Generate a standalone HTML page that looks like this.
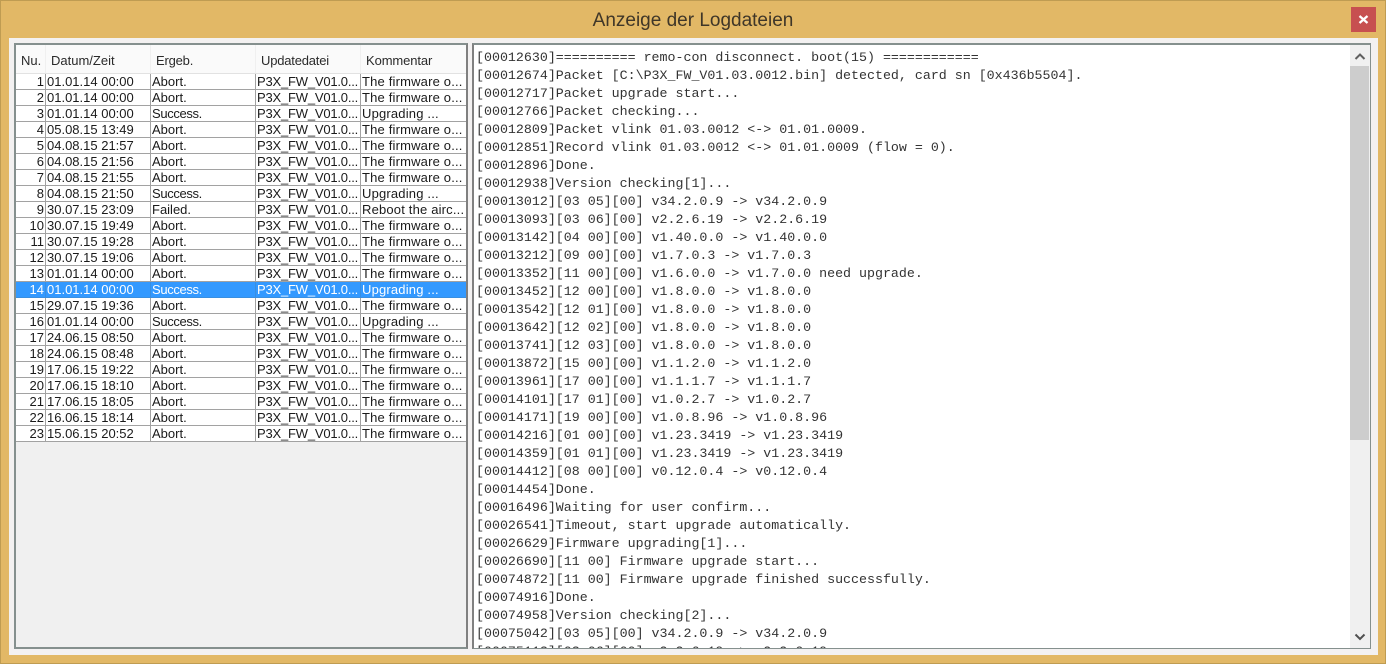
<!DOCTYPE html>
<html><head><meta charset="utf-8"><title>Anzeige der Logdateien</title>
<style>
html,body{margin:0;padding:0;width:1386px;height:664px;overflow:hidden;background:#e2b866}
*{box-sizing:border-box}
.abs{position:absolute}
#frame{left:0;top:0;width:1386px;height:664px;border:1px solid #bf9c52;background:#e2b866}
#title{left:0;top:9px;width:1386px;text-align:center;font:19px/24px "Liberation Sans",sans-serif;color:#3f3628}
#close{left:1351px;top:7px;width:25px;height:25px;background:#c75050}
#client{left:9px;top:38px;width:1369px;height:617px;background:#f3f1f1}
#lp{left:14px;top:43px;width:454px;height:606px;border:2px solid #85908e;border-right-color:#808080;background:#f0f0f0;overflow:hidden}
#hd{left:16px;top:45px;width:450px;height:28px;background:#fafafa;font:13px/31px "Liberation Sans",sans-serif;color:#2a2a2a}
#hd span{position:absolute;top:0}
#hd i{position:absolute;top:0;width:1px;height:28px;background:#f0f0f0}
table{position:absolute;left:16px;top:73px;width:450px;border-collapse:separate;border-spacing:0;table-layout:fixed;font:13px/14px "Liberation Sans",sans-serif;color:#1a1a1a;background:#fff;border-top:1px solid #e2e2e2}
td{height:16px;padding:1px 0 0 1px;border-right:1px solid #a2a2a2;border-bottom:1px solid #a2a2a2;white-space:nowrap;overflow:hidden;vertical-align:top;background:#fff}
td:first-child{text-align:right;padding:1px 1px 0 0}
td:nth-child(4){letter-spacing:-.2px}
td:last-child{border-right:0;letter-spacing:.18px}
td.o{letter-spacing:-.35px}
tr.s td{background:#3399ff;color:#fff;border-color:#3a8fe0}
#rp{left:472px;top:43px;width:899px;height:606px;border:2px solid #85908e;border-left-color:#808080;border-right-width:1px;border-bottom-width:1px;background:#fff;overflow:hidden}
#log{position:absolute;left:2px;top:3px;margin:0;padding-top:1px;font:13.3px/18px "Liberation Mono",monospace;color:#333;white-space:pre}
#sb{left:1350px;top:45px;width:20px;height:603px;background:#f0f0f0}
#th{left:1350px;top:66px;width:19px;height:374px;background:#cdcdcd}
</style></head>
<body>
<div id="frame" class="abs"></div>
<div id="title" class="abs">Anzeige der Logdateien</div>
<div id="close" class="abs"><svg width="25" height="25" style="display:block"><path d="M8.5 9L16.5 16M16.5 9L8.5 16" stroke="#fff" stroke-width="2.3" fill="none"/></svg></div>
<div id="client" class="abs"></div>
<div id="lp" class="abs"></div>
<div id="hd" class="abs"><span style="left:5px">Nu.</span><i style="left:29px"></i><span style="left:35px">Datum/Zeit</span><i style="left:134px"></i><span style="left:140px;letter-spacing:-.2px">Ergeb.</span><i style="left:239px"></i><span style="left:245px;letter-spacing:-.2px">Updatedatei</span><i style="left:344px"></i><span style="left:350px;letter-spacing:-.1px">Kommentar</span></div>
<table>
<colgroup><col style="width:30px"><col style="width:105px"><col style="width:105px"><col style="width:105px"><col style="width:105px"></colgroup>
<tr><td>1</td><td>01.01.14 00:00</td><td>Abort.</td><td>P3X_FW_V01.0...</td><td>The firmware o...</td></tr>
<tr><td>2</td><td>01.01.14 00:00</td><td>Abort.</td><td>P3X_FW_V01.0...</td><td>The firmware o...</td></tr>
<tr><td>3</td><td>01.01.14 00:00</td><td class="o">Success.</td><td>P3X_FW_V01.0...</td><td>Upgrading ...</td></tr>
<tr><td>4</td><td>05.08.15 13:49</td><td>Abort.</td><td>P3X_FW_V01.0...</td><td>The firmware o...</td></tr>
<tr><td>5</td><td>04.08.15 21:57</td><td>Abort.</td><td>P3X_FW_V01.0...</td><td>The firmware o...</td></tr>
<tr><td>6</td><td>04.08.15 21:56</td><td>Abort.</td><td>P3X_FW_V01.0...</td><td>The firmware o...</td></tr>
<tr><td>7</td><td>04.08.15 21:55</td><td>Abort.</td><td>P3X_FW_V01.0...</td><td>The firmware o...</td></tr>
<tr><td>8</td><td>04.08.15 21:50</td><td class="o">Success.</td><td>P3X_FW_V01.0...</td><td>Upgrading ...</td></tr>
<tr><td>9</td><td>30.07.15 23:09</td><td>Failed.</td><td>P3X_FW_V01.0...</td><td>Reboot the airc...</td></tr>
<tr><td>10</td><td>30.07.15 19:49</td><td>Abort.</td><td>P3X_FW_V01.0...</td><td>The firmware o...</td></tr>
<tr><td>11</td><td>30.07.15 19:28</td><td>Abort.</td><td>P3X_FW_V01.0...</td><td>The firmware o...</td></tr>
<tr><td>12</td><td>30.07.15 19:06</td><td>Abort.</td><td>P3X_FW_V01.0...</td><td>The firmware o...</td></tr>
<tr><td>13</td><td>01.01.14 00:00</td><td>Abort.</td><td>P3X_FW_V01.0...</td><td>The firmware o...</td></tr>
<tr class="s"><td>14</td><td>01.01.14 00:00</td><td class="o">Success.</td><td>P3X_FW_V01.0...</td><td>Upgrading ...</td></tr>
<tr><td>15</td><td>29.07.15 19:36</td><td>Abort.</td><td>P3X_FW_V01.0...</td><td>The firmware o...</td></tr>
<tr><td>16</td><td>01.01.14 00:00</td><td class="o">Success.</td><td>P3X_FW_V01.0...</td><td>Upgrading ...</td></tr>
<tr><td>17</td><td>24.06.15 08:50</td><td>Abort.</td><td>P3X_FW_V01.0...</td><td>The firmware o...</td></tr>
<tr><td>18</td><td>24.06.15 08:48</td><td>Abort.</td><td>P3X_FW_V01.0...</td><td>The firmware o...</td></tr>
<tr><td>19</td><td>17.06.15 19:22</td><td>Abort.</td><td>P3X_FW_V01.0...</td><td>The firmware o...</td></tr>
<tr><td>20</td><td>17.06.15 18:10</td><td>Abort.</td><td>P3X_FW_V01.0...</td><td>The firmware o...</td></tr>
<tr><td>21</td><td>17.06.15 18:05</td><td>Abort.</td><td>P3X_FW_V01.0...</td><td>The firmware o...</td></tr>
<tr><td>22</td><td>16.06.15 18:14</td><td>Abort.</td><td>P3X_FW_V01.0...</td><td>The firmware o...</td></tr>
<tr><td>23</td><td>15.06.15 20:52</td><td>Abort.</td><td>P3X_FW_V01.0...</td><td>The firmware o...</td></tr>
</table>
<div id="rp" class="abs"><pre id="log">[00012630]========== remo-con disconnect. boot(15) ============
[00012674]Packet [C:\P3X_FW_V01.03.0012.bin] detected, card sn [0x436b5504].
[00012717]Packet upgrade start...
[00012766]Packet checking...
[00012809]Packet vlink 01.03.0012 &lt;-&gt; 01.01.0009.
[00012851]Record vlink 01.03.0012 &lt;-&gt; 01.01.0009 (flow = 0).
[00012896]Done.
[00012938]Version checking[1]...
[00013012][03 05][00] v34.2.0.9 -&gt; v34.2.0.9
[00013093][03 06][00] v2.2.6.19 -&gt; v2.2.6.19
[00013142][04 00][00] v1.40.0.0 -&gt; v1.40.0.0
[00013212][09 00][00] v1.7.0.3 -&gt; v1.7.0.3
[00013352][11 00][00] v1.6.0.0 -&gt; v1.7.0.0 need upgrade.
[00013452][12 00][00] v1.8.0.0 -&gt; v1.8.0.0
[00013542][12 01][00] v1.8.0.0 -&gt; v1.8.0.0
[00013642][12 02][00] v1.8.0.0 -&gt; v1.8.0.0
[00013741][12 03][00] v1.8.0.0 -&gt; v1.8.0.0
[00013872][15 00][00] v1.1.2.0 -&gt; v1.1.2.0
[00013961][17 00][00] v1.1.1.7 -&gt; v1.1.1.7
[00014101][17 01][00] v1.0.2.7 -&gt; v1.0.2.7
[00014171][19 00][00] v1.0.8.96 -&gt; v1.0.8.96
[00014216][01 00][00] v1.23.3419 -&gt; v1.23.3419
[00014359][01 01][00] v1.23.3419 -&gt; v1.23.3419
[00014412][08 00][00] v0.12.0.4 -&gt; v0.12.0.4
[00014454]Done.
[00016496]Waiting for user confirm...
[00026541]Timeout, start upgrade automatically.
[00026629]Firmware upgrading[1]...
[00026690][11 00] Firmware upgrade start...
[00074872][11 00] Firmware upgrade finished successfully.
[00074916]Done.
[00074958]Version checking[2]...
[00075042][03 05][00] v34.2.0.9 -&gt; v34.2.0.9
[00075113][03 06][00] v2.2.6.19 -&gt; v2.2.6.19</pre></div>
<div id="sb" class="abs"></div>
<div id="th" class="abs"></div>
<svg class="abs" style="left:1350px;top:48px" width="20" height="16"><path d="M5.5 11L10 6.5L14.5 11" stroke="#606060" stroke-width="2" fill="none"/></svg>
<svg class="abs" style="left:1350px;top:629px" width="20" height="16"><path d="M5.5 5.5L10 10L14.5 5.5" stroke="#505050" stroke-width="2" fill="none"/></svg>
</body></html>
